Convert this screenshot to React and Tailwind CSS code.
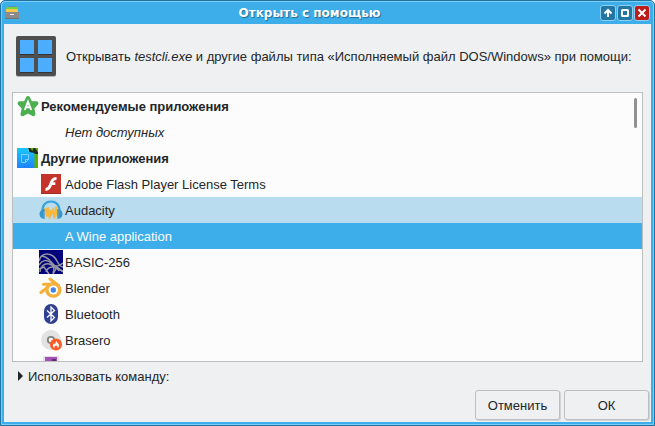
import { useState } from 'react';

const FileManagerIcon = () => (
  <svg width="14" height="14" viewBox="0 0 14 14" aria-hidden="true">
    <path d="M3 0h8l1 2H2z" fill="#5b8fc4" />
    <path d="M2 1h10l1 2H1z" fill="#72d13d" />
    <path d="M1 3h12v3H1z" fill="#f5c84c" />
    <path d="M0 6h14v7H0z" fill="#8b8b8b" />
    <path d="M0 12h14v1H0z" fill="#757575" />
    <path d="M5 8h4v1H5z" fill="#f2f2f2" />
  </svg>
);

const ExecutableIcon = () => (
  <svg width="40" height="41" viewBox="0 0 40 41" aria-hidden="true">
    <rect y="1" width="40" height="40" rx="2" fill="#b5b6b8" />
    <rect width="40" height="40" rx="2" fill="#4f4f4f" />
    <path d="M4 5h14v14H4zM22 5h14v14H22zM4 23h14v14H4zM22 23h14v14H22z" fill="#353535" />
    <path d="M4 4h14v14H4zM22 4h14v14H22zM4 22h14v14H4zM22 22h14v14H22z" fill="#4daeff" />
  </svg>
);

const RecommendedIcon = () => (
  <svg width="24" height="24" viewBox="0 0 24 24" aria-hidden="true">
    <path
      d="M12 4l2.400 4.900 6 .4-4.200 4.500 1.300 6.400L12 17.300l-5.500 2.900 1.300-6.400L3.600 9.300l6-.4z"
      fill="#4caf50"
      stroke="#4caf50"
      strokeWidth="4"
      strokeLinejoin="round"
    />
    <path d="M8.800 16L12 7.600l3.200 8.400M10 13.300h4" fill="none" stroke="#fff" strokeWidth="1.900" />
  </svg>
);

const OtherIcon = () => (
  <svg width="24" height="24" viewBox="0 0 24 24" aria-hidden="true">
    <defs>
      <linearGradient id="other-sheet" x1="0" y1="0" x2="0" y2="1">
        <stop offset="0" stopColor="#18c8ff" />
        <stop offset="1" stopColor="#1e82fa" />
      </linearGradient>
    </defs>
    <path d="M12 6h10v16H12z" fill="#59b200" />
    <path d="M12 2h8l2 4v2h-8z" fill="#222b22" />
    <path d="M14 2l2.500 3 1-3M19 2l3 4V2z" fill="#59b200" />
    <path d="M1 2h11l1 4 5.500 1v15H1z" fill="url(#other-sheet)" />
    <path d="M5.500 8.500h7v5l-3 3h-4zM9.500 16.500v-3h3" fill="none" stroke="#7fd0ff" />
  </svg>
);

const FlashIcon = () => (
  <svg width="24" height="24" viewBox="0 0 24 24" aria-hidden="true">
    <path d="M2 2h20v20H2z" fill="#c5342b" />
    <path d="M2 21h20v1H2z" fill="#a52a23" />
    <path
      d="M17.500 5v3c-2 0-2.800.9-3.400 2.300h2.200v2.700H13c-1.100 3.400-2.900 5.700-6.500 5.900v-2.900c2.200-.4 3.100-2.200 4-4.700C11.700 7.900 13.400 5.100 17.500 5z"
      fill="#fff"
    />
  </svg>
);

const AudacityIcon = () => (
  <svg width="24" height="24" viewBox="0 0 24 24" aria-hidden="true">
    <path d="M3.500 14c-.5-6 2.500-10.500 8.500-10.500S21 8 20.500 14" fill="none" stroke="#3aa5dc" strokeWidth="2.200" />
    <path
      d="M5.500 13.500l1-3.500 1.500 8.500 1-9 1.500 11 1-8.500 1 4 1.500-4 1.500 8.500 1.500-12 1.500 10 1-7"
      fill="none"
      stroke="#f8b83c"
      strokeWidth="2"
    />
    <path d="M4.500 11.500v9.200C2 20.500.5 18.500.5 16s1.500-4.300 4-4.500zM19.500 11.500v9.200c2.500-.2 4-2.200 4-4.700s-1.500-4.300-4-4.500z" fill="#3498d0" />
    <path d="M5 11v10M19 11v10" stroke="#4488b5" strokeWidth="1.200" />
  </svg>
);

const BasicIcon = () => (
  <svg width="24" height="24" viewBox="0 0 24 24" aria-hidden="true">
    <path d="M0 0h24v24H0z" fill="#00007d" />
    <g fill="none" stroke="#9696a0" strokeWidth="1.500">
      <path d="M0 11c1-4 4-7 8-7 5 0 8 3 10 7s4 6 6 6" />
      <path d="M0 15c3-5 8-6 12-2s6 7 12 8" />
      <path d="M2 6c5 0 8 3 11 7s6 4 11 0" />
      <path d="M1 22c0-5 4-9 9-8s6 5 4 9M7 22c2-6 10-7 13-1" />
      <path d="M0 19l5-2 5 7M14 24l4-7 6 5" />
    </g>
  </svg>
);

const BlenderIcon = () => (
  <svg width="24" height="24" viewBox="0 0 24 24" aria-hidden="true">
    <path
      d="M11 3l8.500 6.500M4.500 8.200h11M2 16.500L12 8.800"
      fill="none"
      stroke="#f3b13b"
      strokeWidth="3"
      strokeLinecap="round"
    />
    <ellipse cx="14.300" cy="14" rx="8.200" ry="7.800" fill="#f3b13b" />
    <ellipse cx="14.300" cy="14" rx="4.700" ry="4.500" fill="#fff" />
    <circle cx="14.300" cy="14" r="2.700" fill="#4285e8" />
  </svg>
);

const BluetoothIcon = () => (
  <svg width="24" height="24" viewBox="0 0 24 24" aria-hidden="true">
    <rect x="5" y="2" width="14" height="20" rx="7" fill="#2f3f91" />
    <path d="M8 8.500l7.500 7L12 19V5l3.500 3.500-7.500 7" fill="none" stroke="#fff" strokeWidth="1.300" />
  </svg>
);

const BraseroIcon = () => (
  <svg width="24" height="24" viewBox="0 0 24 24" aria-hidden="true">
    <circle cx="12" cy="12" r="10" fill="#e2e2e2" />
    <circle cx="12" cy="12" r="3.200" fill="#fafafa" stroke="#7f7f7f" strokeWidth="1.800" />
    <circle cx="17" cy="16.500" r="6" fill="#ff5b26" />
    <path
      d="M17 12.500c.3 1.800 3 2.600 3 5 0 1.200-.6 2-1.400 2.500.1-1.400-.6-2-1.600-2.700-1 .7-1.700 1.300-1.600 2.700-.8-.5-1.400-1.300-1.400-2.500 0-1 .5-1.600 1.100-2.200l.6 1c.8-.9 1.300-2.200 1.300-3.800z"
      fill="#fff"
    />
  </svg>
);

const PurpleIcon = () => (
  <svg width="24" height="24" viewBox="0 0 24 24" aria-hidden="true">
    <path d="M4 2h16v20H4z" fill="#e4e1e6" />
    <path d="M6 3h12v17H6z" fill="#a24fb8" />
    <path d="M13 5h4v3h-4z" fill="#5c3268" />
  </svg>
);

const recommended = [{ id: 'none', name: 'Нет доступных', italic: true }];

const applications = [
  { id: 'flash', name: 'Adobe Flash Player License Terms', icon: FlashIcon },
  { id: 'audacity', name: 'Audacity', icon: AudacityIcon },
  { id: 'wine', name: 'A Wine application' },
  { id: 'basic256', name: 'BASIC-256', icon: BasicIcon },
  { id: 'blender', name: 'Blender', icon: BlenderIcon },
  { id: 'bluetooth', name: 'Bluetooth', icon: BluetoothIcon },
  { id: 'brasero', name: 'Brasero', icon: BraseroIcon },
  { id: 'next', name: '', icon: PurpleIcon }
];

const GroupRow = ({ icon: Icon, children }) => (
  <div className="flex h-[26px] items-center gap-px pl-[3px] font-bold">
    <Icon />
    <span className="pt-[2px]">{children}</span>
  </div>
);

const AppRow = ({ app, selected, hovered, onSelect }) => (
  <li
    role="option"
    aria-selected={selected}
    onClick={onSelect}
    className={`flex h-[26px] items-center gap-[2px] pl-[26px] ${
      selected ? 'bg-[#3daee9] text-[#fcfcfc]' : hovered ? 'bg-[#b9dcee]' : ''
    } ${app.italic ? 'italic' : ''}`}
  >
    <span className="size-6 shrink-0">{app.icon && <app.icon />}</span>
    <span className="pt-[2px]">{app.name}</span>
  </li>
);

const TitleButton = ({ label, danger, children }) => (
  <button
    type="button"
    aria-label={label}
    className={`flex size-4 items-center justify-center rounded-[3px] border border-[#8ed0f4] ${
      danger ? 'bg-[#bd1a1a]' : 'bg-[#2476a3]'
    }`}
  >
    <svg width="10" height="10" viewBox="0 0 10 10" fill="none" stroke="#fff" strokeWidth="2" aria-hidden="true">
      {children}
    </svg>
  </button>
);

const DialogButton = ({ children }) => (
  <button
    type="button"
    className="h-[30px] w-[85px] rounded-[3px] border border-[#bcbebf] bg-[#eff0f1] pt-[2px] shadow-[1px_1px_0_#d2d3d4]"
  >
    {children}
  </button>
);

export default function App() {
  const [selected, setSelected] = useState('wine');
  const [expanded, setExpanded] = useState(false);

  return (
    <div className="flex h-screen flex-col overflow-hidden rounded-t-[5px] border border-[#1f73a3] bg-[#3daee9] font-['Liberation_Sans',Arial,sans-serif] text-[13px] leading-4 text-[#232629]">
      <div className="flex min-h-0 flex-1 flex-col rounded-t-[4px] border border-[#7fcdf5] px-[2px] pb-[2px]">
        {/* Title bar */}
        <header className="flex h-[22px] shrink-0 items-center px-px">
          <FileManagerIcon />
          <h1 className="flex-1 text-center font-['DejaVu_Sans',sans-serif] text-xs font-bold text-white [text-shadow:1px_1px_1px_#1f6c99]">
            Открыть с помощью
          </h1>
          <div className="flex gap-px">
            <TitleButton label="Свернуть">
              <path d="M5 9V2M1.500 5.500L5 2l3.500 3.500" />
            </TitleButton>
            <TitleButton label="Развернуть">
              <rect x="2" y="2" width="6" height="6" rx="0.500" />
            </TitleButton>
            <TitleButton label="Закрыть" danger>
              <path d="M1.500 1.500l7 7M8.500 1.500l-7 7" />
            </TitleButton>
          </div>
        </header>

        <main className="flex min-h-0 flex-1 flex-col bg-[#eff0f1]">
          <div className="flex shrink-0 items-center gap-[10px] px-3 pt-3 pb-[15px]">
            <ExecutableIcon />
            <p className="whitespace-nowrap">
              Открывать <i>testcli.exe</i> и другие файлы типа «Исполняемый файл DOS/Windows» при помощи:
            </p>
          </div>

          {/* Application list */}
          <div className="mx-2 flex min-h-0 flex-1 border border-[#bcbebf] bg-[#fcfcfc]">
            <div className="relative min-w-0 flex-1 overflow-hidden">
              <GroupRow icon={RecommendedIcon}>Рекомендуемые приложения</GroupRow>
              <ul role="listbox" aria-label="Рекомендуемые приложения">
                {recommended.map((app) => (
                  <AppRow key={app.id} app={app} />
                ))}
              </ul>
              <GroupRow icon={OtherIcon}>Другие приложения</GroupRow>
              <ul role="listbox" aria-label="Другие приложения">
                {applications.map((app) => (
                  <AppRow
                    key={app.id}
                    app={app}
                    selected={selected === app.id}
                    hovered={app.id === 'audacity'}
                    onSelect={() => setSelected(app.id)}
                  />
                ))}
              </ul>
              <div className="absolute top-[5px] right-[5px] h-[30px] w-[3px] rounded-full bg-[#909192]" />
            </div>
          </div>

          <div className="flex h-7 shrink-0 items-center px-[14px]">
            <button
              type="button"
              aria-expanded={expanded}
              onClick={() => setExpanded(!expanded)}
              className="flex items-center gap-[5px]"
            >
              <svg width="5" height="10" viewBox="0 0 5 10" aria-hidden="true">
                <path d="M0 0l5 5-5 5z" fill="#232629" />
              </svg>
              <span className="pt-[2px]">Использовать команду:</span>
            </button>
          </div>

          <div className="flex shrink-0 justify-end gap-1 px-[2px] pb-[2px]">
            <DialogButton>Отменить</DialogButton>
            <DialogButton>ОК</DialogButton>
          </div>
        </main>
      </div>
    </div>
  );
}
